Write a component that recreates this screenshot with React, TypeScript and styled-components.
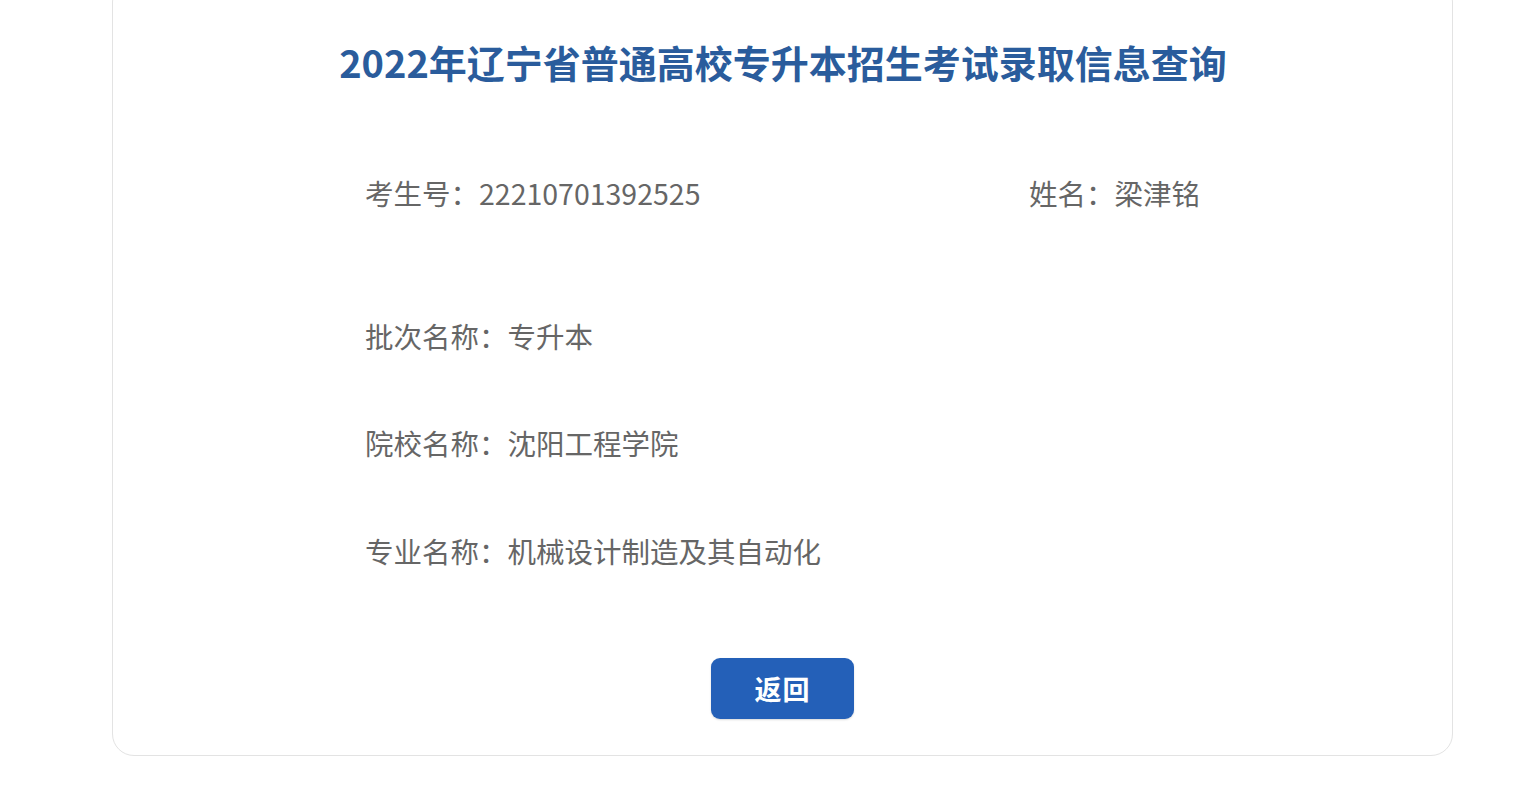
import React from "react";
import styled, { createGlobalStyle } from "styled-components";

const GlobalStyle = createGlobalStyle`
  html, body {
    margin: 0;
    padding: 0;
    background: #ffffff;
    overflow: hidden;
  }
  body {
    font-family: "Noto Sans CJK SC", "Noto Sans", sans-serif;
  }
`;

const Page = styled.div`
  width: 1539px;
  height: 785px;
  overflow: hidden;
  background: #ffffff;
`;

const Card = styled.div`
  box-sizing: border-box;
  margin: -20px 0 0 112px;
  width: 1341px;
  border: 1.5px solid #e3e3e3;
  border-radius: 22px;
  background: #ffffff;
  padding: 55px 0 36px;
  display: flex;
  flex-direction: column;
`;

const Title = styled.h1`
  margin: 0;
  text-align: center;
  font-size: 38px;
  line-height: 51px;
  font-weight: 700;
  color: #2a5c9c;
  padding-left: 1px;
`;

const InfoList = styled.div`
  display: flex;
  flex-direction: column;
  padding-left: 252px;
`;

const Row = styled.div<{ $gap: number }>`
  display: grid;
  grid-template-columns: 664px auto;
  margin-top: ${(p) => p.$gap}px;
  font-size: 28.5px;
  line-height: 40px;
  color: #666666;
`;

const Field = styled.span`
  white-space: nowrap;
`;

const ButtonWrap = styled.div`
  display: flex;
  justify-content: center;
  margin-top: 87px;
`;

const BackButton = styled.button`
  width: 143px;
  height: 61px;
  border: none;
  border-radius: 9px;
  background: #2460b8;
  color: #ffffff;
  font-family: "Noto Sans CJK SC", sans-serif;
  font-size: 27px;
  font-weight: 700;
  letter-spacing: 1px;
  cursor: pointer;
  box-shadow: 0 1px 2px rgba(0, 0, 0, 0.15);
`;

export default function App() {
  return (
    <Page>
      <GlobalStyle />
      <Card>
        <Title>2022年辽宁省普通高校专升本招生考试录取信息查询</Title>
        <InfoList>
          <Row $gap={86}>
            <Field>考生号：22210701392525</Field>
            <Field>姓名：梁津铭</Field>
          </Row>
          <Row $gap={103}>
            <Field>批次名称：专升本</Field>
          </Row>
          <Row $gap={67}>
            <Field>院校名称：沈阳工程学院</Field>
          </Row>
          <Row $gap={68}>
            <Field>专业名称：机械设计制造及其自动化</Field>
          </Row>
        </InfoList>
        <ButtonWrap>
          <BackButton>返回</BackButton>
        </ButtonWrap>
      </Card>
    </Page>
  );
}
